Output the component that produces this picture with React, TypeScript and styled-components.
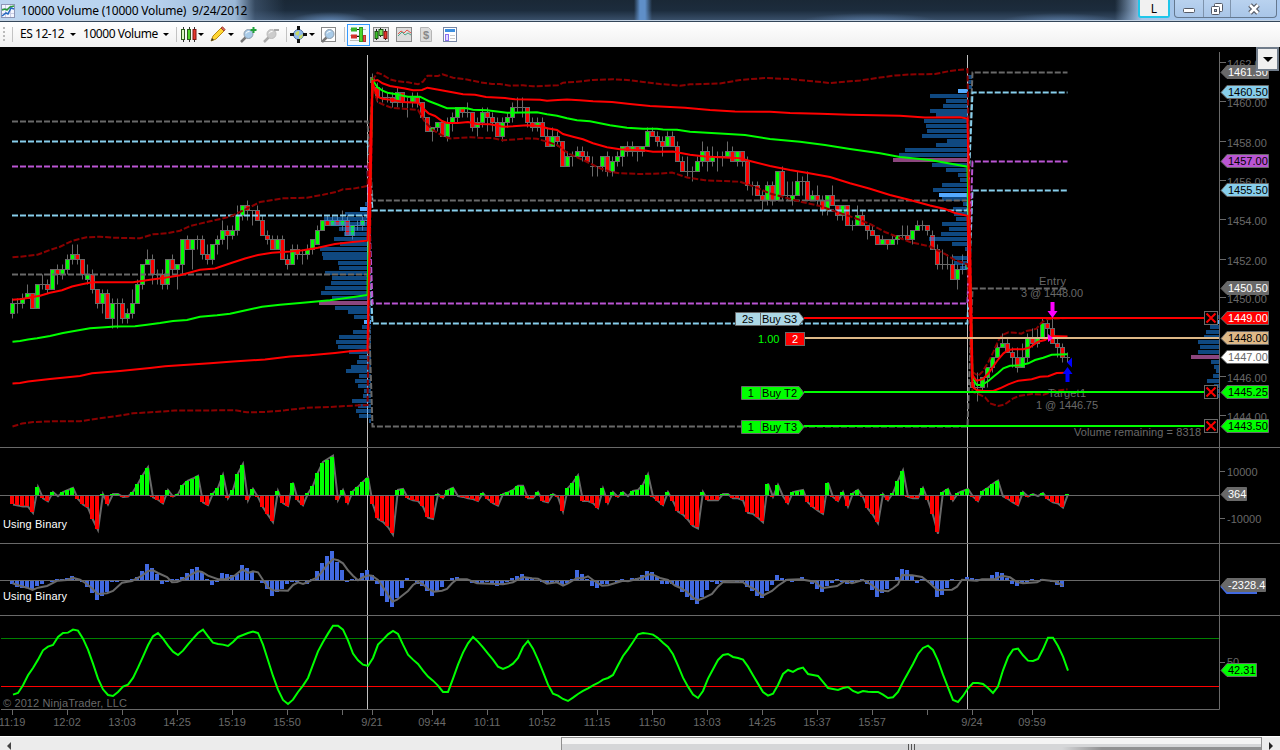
import styled, { createGlobalStyle } from "styled-components";

type Candle = [number, number, number, number];
type ProfileRow = [number, number, string?];

const GRAY = "#696969";
const SKY = "#87ceeb";
const ORCHID = "#ba55d3";
const LIME = "#00ff00";
const RED = "#ff0000";
const DARK_RED = "#8b0000";

const barX = (i: number) => 12.5 + i * 5;
const tickY = (t: number) => Math.round(313.1 - 4.91 * t) + 0.5;

// open, close, high, low in quarter point ticks from 1449.25
const candles: Candle[] = [
  [0, 2, 3, -1], [2, 2, 3, 0], [2, 3, 4, 1], [3, 4, 6, 3], [4, 1, 4, 1],
  [1, 6, 6, 1], [6, 6, 8, 5], [6, 5, 7, 4], [5, 9, 9, 5], [9, 8, 10, 6],
  [8, 9, 10, 7], [9, 11, 12, 8], [11, 12, 14, 10], [12, 11, 14, 10], [11, 8, 11, 7],
  [7, 8, 10, 6], [8, 5, 9, 4], [5, 2, 5, 1], [2, 4, 5, 0], [4, -1, 5, -1],
  [-1, 2, 3, -3], [2, 2, 3, -3], [2, -1, 3, -2], [-1, 0, 1, -2], [0, 2, 5, -1],
  [2, 6, 7, 2], [6, 10, 10, 5], [10, 11, 13, 10], [11, 8, 12, 6], [8, 8, 9, 6],
  [8, 6, 9, 5], [6, 11, 11, 5], [11, 9, 12, 8], [9, 10, 10, 5], [10, 15, 15, 8],
  [15, 13, 16, 13], [13, 15, 15, 9], [15, 15, 16, 13], [15, 12, 16, 11], [12, 11, 14, 10],
  [11, 14, 14, 10], [14, 15, 16, 12], [15, 17, 19, 14], [17, 16, 18, 13], [16, 17, 18, 15],
  [17, 20, 22, 16], [20, 22, 22, 19], [22, 21, 23, 19], [21, 21, 21, 18], [21, 19, 22, 19],
  [19, 16, 20, 16], [16, 15, 17, 14], [15, 13, 16, 13], [13, 15, 16, 13], [15, 11, 16, 11],
  [11, 10, 12, 9], [10, 13, 14, 10], [13, 12, 14, 11], [12, 12, 13, 10], [12, 13, 14, 11],
  [13, 15, 15, 12], [14, 17, 18, 14], [17, 19, 19, 17], [19, 18, 20, 18], [18, 19, 20, 18],
  [19, 18, 20, 18], [18, 19, 21, 17], [19, 16, 20, 16], [16, 18, 18, 15], [18, 18, 19, 17],
  [18, 19, 20, 17], [19, 19, 20, 18], [48, 47, 49, 46], [46, 44, 47, 43], [44, 44, 46, 43],
  [44, 44, 45, 43], [44, 43, 45, 42], [43, 45, 46, 42], [45, 43, 45, 42], [43, 43, 44, 40],
  [43, 44, 45, 42], [44, 43, 45, 42], [43, 40, 43, 40], [40, 37, 40, 37], [37, 38, 38, 35],
  [38, 39, 39, 37], [39, 36, 39, 36], [36, 39, 40, 35], [39, 40, 41, 37], [40, 42, 42, 39],
  [42, 41, 42, 40], [41, 41, 43, 40], [41, 38, 41, 37], [38, 39, 40, 36], [39, 41, 42, 38],
  [41, 40, 42, 37], [40, 39, 41, 37], [39, 36, 40, 36], [36, 39, 40, 35], [39, 40, 41, 38],
  [40, 42, 43, 39], [42, 42, 44, 41], [42, 42, 44, 40], [42, 39, 42, 38], [39, 38, 40, 37],
  [38, 39, 40, 37], [39, 36, 40, 36], [36, 34, 38, 34], [34, 36, 38, 34], [36, 35, 37, 34],
  [35, 30, 35, 30], [30, 32, 33, 30], [32, 32, 33, 30], [32, 33, 34, 32], [33, 32, 34, 31],
  [32, 31, 33, 31], [30, 30, 32, 28], [30, 30, 30, 28], [30, 32, 32, 29], [32, 29, 33, 28],
  [29, 31, 32, 28], [31, 32, 33, 30], [32, 34, 34, 30], [34, 33, 35, 32], [33, 34, 35, 32],
  [34, 33, 34, 31], [33, 34, 34, 32], [34, 37, 38, 34], [37, 36, 38, 36], [36, 35, 37, 34],
  [35, 34, 36, 32], [34, 36, 37, 34], [36, 34, 37, 34], [34, 31, 35, 31], [31, 29, 32, 29],
  [29, 29, 32, 28], [29, 29, 30, 27], [29, 31, 32, 29], [31, 33, 35, 30], [33, 31, 34, 29],
  [31, 32, 34, 30], [32, 32, 33, 29], [32, 32, 33, 30], [32, 33, 35, 32], [33, 31, 34, 31],
  [31, 33, 33, 30], [33, 31, 33, 30], [31, 26, 32, 25], [26, 26, 27, 24], [26, 24, 27, 24],
  [24, 23, 25, 21], [23, 26, 27, 22], [26, 23, 27, 22], [23, 29, 29, 23], [29, 24, 30, 23],
  [24, 24, 27, 23], [23, 24, 27, 22], [24, 27, 29, 24], [27, 27, 28, 24], [27, 23, 29, 23],
  [23, 24, 25, 23], [24, 23, 26, 22], [23, 21, 24, 20], [21, 24, 24, 20], [24, 22, 26, 22],
  [22, 20, 22, 19], [20, 22, 22, 19], [22, 18, 22, 18], [18, 18, 19, 17], [18, 20, 22, 18],
  [20, 18, 21, 18], [18, 17, 18, 15], [17, 16, 18, 16], [16, 14, 16, 14], [14, 15, 16, 14],
  [15, 14, 15, 13], [14, 15, 16, 14], [15, 16, 16, 14], [16, 16, 18, 15], [16, 15, 18, 15],
  [15, 17, 17, 14], [17, 18, 19, 17], [18, 18, 19, 17], [18, 17, 18, 16], [16, 13, 17, 13],
  [13, 10, 14, 9], [10, 10, 13, 9], [10, 10, 12, 9], [10, 7, 12, 7], [7, 9, 10, 5],
  [9, 9, 12, 8], [9, 10, 10, 9], [-14, -15, -13, -15], [-15, -15, -12, -18], [-15, -13, -13, -16],
  [-13, -11, -11, -15], [-11, -9, -9, -12], [-9, -7, -6, -9], [-7, -6, -4, -7], [-6, -8, -5, -8],
  [-8, -9, -7, -11], [-9, -11, -7, -12], [-11, -9, -6, -11], [-9, -5, -4, -10], [-5, -6, -3, -7],
  [-6, -5, -3, -7], [-5, -2, -1, -5], [-2, -3, -1, -5], [-3, -6, -1, -6], [-6, -7, -5, -9],
  [-7, -9, -6, -10], [-9, -9, -8, -10],
];

// five session levels, one y per session
const levels = [
  { color: GRAY, ys: [121.5, 200.5, 72.5] },
  { color: GRAY, ys: [274.5, 426.5, 288.5] },
  { color: SKY, ys: [141.5, 210.5, 92.5] },
  { color: SKY, ys: [215.5, 323.5, 190.5] },
  { color: ORCHID, ys: [166.5, 303.5, 161.5] },
];

const bands = [
  {
    color: DARK_RED,
    dashed: true,
    points:
      "12.5,257.3 20,256.7 37.5,254.7 50,250 60,246.7 72.5,240.7 86.5,237.3 100,236.7 113,237.7 140,238.3 153,234.3 167,233.3 180,230.7 190,226 210,221.3 230,216.7 247,208.7 260,202 283,198.3 307,197.7 323,194.7 337,191.7 343,189.3 353,188.7 367.5,186 372.5,80 377.5,72.7 382.5,74.7 390,79.3 397.5,81.3 408,82.3 418,84.3 423,81.7 427.5,75.7 438,76 442.5,74.3 453,77.7 468,79.7 480,82.3 492,84 500,84 510,85.7 523,85.3 533,86.3 547,85.7 558,85.3 563,82.7 577,81.7 593,80 613,79.3 627,80 643,82 660,84 680,85.7 690,84.3 720,83.5 740,80 765,78 790,79 830,83 860,80.5 880,77.5 895,75.5 910,74.5 935,74 950,71 967.5,69 972.5,372 978,375.7 982.5,371.7 988.5,361.7 993.5,351.7 998,341 1002.5,335 1008.5,332.3 1015,332.7 1021.5,333.7 1026.5,331 1031.5,330 1036.5,328.7 1041.5,322.7 1046.5,319.3 1067.5,318",
  },
  {
    color: DARK_RED,
    dashed: true,
    points:
      "12.5,426.5 22,423.5 33,422 52,421.3 80,421.3 97,418.7 115,416.3 133,413.3 155,412 175,410.5 235,410.3 247,412.3 265,412 285,410.3 307,407.7 330,407 345,406 367.5,405 372.5,85 377.5,102 383,104.5 392,108 403,108.7 418,110 425,122 433,130 443,136 450,138.5 470,137.3 485,138 492,138 503,140.3 517,139.3 527,138.3 537,138.7 547,141.7 557,145 568,153.3 583,160 600,168.3 610,171.7 620,173.3 640,174 660,173.5 672,172.5 687,177.5 705,180.3 740,181.7 755,187 770,193.5 785,197.5 800,201.5 820,206 835,211.3 855,218 870,224 885,232 910,242 930,246.5 945,254 955,260 967.5,264.3 972.5,391.7 978.3,394 985,397.3 990,403.3 998.3,406 1005,404.3 1013.3,398.3 1020,395.7 1031.7,394 1043.3,394.7 1056.7,390.7 1067.5,389.3",
  },
  {
    color: LIME,
    dashed: false,
    points:
      "12.5,341.7 20,341 28,339.5 37,338.3 50,336 63,333 80,330 90,328.3 105,327.3 115,326.5 135,326.3 147,324.7 160,323 173,321 187,320 200,316.7 217,315.3 230,313.7 247,310 262,306.7 280,304.7 300,303 330,300.3 350,297.5 367.5,295 372.5,80 377.5,87.3 382.5,90.7 387.5,92.7 395,94 403,95.7 408,96.7 420,96.7 428.5,101 437,104.3 447,108.3 467,108.3 473,109.7 487,110.3 507,112.7 537,112.3 547,114.3 557,115.7 567,118.3 577,120.3 590,121.3 600,123.3 610,125.3 627,127.7 643,128.7 657,128.7 663,129.5 677,129.7 690,131.7 720,133.5 745,135 770,139 800,141.7 825,145 850,149 880,153.3 900,157 930,160 967.5,166.7 972.5,378 976.7,385 981.7,385 988.3,381 993.3,376.7 998.3,372.7 1003.3,368.3 1010,365.7 1020,365.3 1028.3,363.3 1035,360 1043.3,357.7 1051.7,354.7 1067.5,354.3",
  },
  {
    color: RED,
    dashed: false,
    points:
      "12.5,299.7 22,299 30,297.5 40,295.7 50,292.7 62,290.3 72,286.5 82,284.3 92,282.3 133,282.3 150,279.7 165,277.7 180,275.3 200,269.7 215,268.5 232,262.7 245,258.5 258,255 272,252.7 290,251.5 303,250.3 318,247.7 335,244 350,242.3 367.5,240.7 372.5,81 377.5,80 382.5,83.3 390,86 405,88.5 413,90.3 422,90 427.5,87.7 440,90 455,92.7 463,94.3 475,94.7 486,97 505,98 515,99.3 540,99.7 547,100.7 558,100 567,99.5 580,100.3 593,101.3 612,102 630,104 650,106 660,106.5 685,107.8 710,110 735,111.5 770,111.8 790,113 820,113.8 850,114.7 900,115.7 925,117.5 960,117.3 967.5,118.5 972.5,375 976.5,380.7 982.5,379.3 988.5,373.3 993.5,366 998.5,359 1003.5,353.3 1008.5,350 1013.5,349.3 1023.5,349.3 1030,347.3 1038,341.7 1045,340 1051.5,336 1067.5,336.5",
  },
  {
    color: RED,
    dashed: false,
    points:
      "12.5,383.5 20,383 28,381.5 50,379 80,376 92,373.3 120,371 150,368 165,366.3 210,363.3 233,361.5 265,359.5 290,356.5 310,355.3 335,353 350,351.3 367.5,350.3 372.5,82 375,90 377.5,96.7 382.5,98.7 393,100 403,102 418,102.7 423,108.3 428.5,113.3 435,116 442,121 447,123 458,123 468,122 477,124 490,124.3 503,126.7 513,126.3 527,125.3 540,126 547,128.3 557,130 563,134 573,136.7 583,139.3 593,143.3 607,147.3 620,149.3 643,150.3 653,151.7 673,151.5 690,154.7 705,156.5 740,158.3 750,161 770,166 790,170 805,172.5 830,177 850,183.3 870,188.7 890,195 908,199.5 930,205.5 945,209 955,213 967.5,215.7 972.5,387 976.7,390 983.3,391 993.3,391 1000,388.3 1008.3,384.3 1018.3,380.7 1031.7,379.3 1040,376.7 1048.3,376.3 1056.7,373 1067.5,372.7",
  },
];

// left edge and centre y of every volume row
const profiles: { right: number; rows: ProfileRow[] }[] = [
  {
    right: 371,
    rows: [
      [365, 204], [360, 209, "hi"], [345, 214], [324, 219], [331, 224], [339, 229], [344, 234],
      [334, 239], [340, 244], [320, 249], [322, 254], [323, 258], [338, 263], [339, 268],
      [325, 273], [332, 278], [331, 283], [325, 288], [321, 293], [332, 298], [319, 303, "poc"],
      [335, 308], [348, 312], [354, 317], [364, 322, "hi"], [362, 327], [353, 332], [339, 337],
      [336, 342], [338, 347], [349, 352], [359, 357], [357, 362], [351, 367], [346, 371],
      [359, 376], [355, 381], [358, 386], [364, 391], [363, 396], [352, 401], [358, 406],
      [356, 411], [359, 416], [369, 421],
    ],
  },
  {
    right: 968,
    rows: [
      [958, 91, "hi"], [930, 96], [946, 101], [943, 106], [930, 111], [936, 115], [924, 121],
      [926, 126], [927, 131], [922, 136], [947, 141], [936, 145], [905, 150], [899, 155],
      [893, 160, "poc"], [932, 165], [946, 170], [958, 175], [960, 180], [942, 185], [933, 190],
      [939, 195, "hi"], [942, 199], [963, 204], [953, 209], [954, 214], [956, 219], [942, 224],
      [949, 229], [941, 234], [929, 239], [952, 244], [965, 249], [953, 258], [954, 263],
      [960, 268],
    ],
  },
  {
    right: 1219,
    rows: [
      [1216, 317], [1217, 322, "hi"], [1210, 327], [1206, 332], [1204, 337], [1198, 342],
      [1200, 347], [1198, 352], [1191, 357, "poc"], [1211, 362], [1214, 367], [1216, 371],
      [1213, 376], [1207, 381], [1214, 386], [1215, 391], [1217, 396],
    ],
  },
];

// bar heights in thirds of a pixel
const waves = [
  -26, -29, -32, -32, -50, 25, -8, -17, 10, -2, 10, 16, 22, -10, -26, -35, -70, -100, 4, -26, 4, 4,
  -4, -3, 10, 34, 60, 82, -5, -12, -23, 16, -3, 4, 30, 43, 49, 57, -20, -28, 6, 22, 60, -8, 16, 64,
  91, -14, 19, -4, -34, -56, -77, 13, -22, -30, 37, -14, -28, 6, 28, 67, 97, 106, 115, -13, 16, -22,
  13, 25, 40, 52, -26, -68, -76, -91, -113, 16, 19, -8, -14, -16, -32, -64, -68, 4, -8, 16, 22, -2,
  -4, -8, -10, -16, 7, -10, -22, -29, 4, 9, 16, 28, 28, -8, -8, 10, -16, -20, 4, -4, -46, 22, 37, 58,
  -16, -16, -22, -36, 20, -22, 10, -4, 10, -2, 13, 16, 31, 61, -3, -16, -28, 10, -16, -46, -55, -70,
  -88, -95, 10, -14, -14, -14, 4, 4, -8, -8, -14, -50, -53, -64, -77, 34, -4, 31, -2, -23, 10, 13,
  16, -20, -33, -44, -53, 37, -4, -16, 10, -32, 7, 16, -4, -38, -56, -80, 4, -14, 7, 43, 73, -4, -8,
  -8, 22, -14, -56, -110, 10, 19, -14, 7, 13, 19, -3, -16, 13, 22, 34, 43, -2, -10, -20, -28, 10, -3,
  4, -2, 7, -10, -20, -23, -35, 4,
];

const delta = [
  -10, -19, -22, -22, -26, -16, -10, -2, -4, 3, 4, 7, 12, 4, -4, -19, -37, -58, -46, -34, -5, -5, -2,
  -2, 2, 10, 28, 49, 37, 19, -10, -5, 2, 4, 10, 22, 34, 40, 24, 2, -13, -3, 22, 19, 16, 19, 46, 37,
  24, -2, -7, -25, -46, -34, -25, -10, -5, -3, -2, -10, 4, 28, 52, 73, 88, 55, 31, -4, 2, 2, 22, 31,
  16, -10, -46, -64, -79, -52, -22, 7, -2, -10, -16, -31, -46, -35, -19, -2, 7, 10, 2, 2, -7, -7, -7,
  -5, -7, -16, -9, -5, 7, 13, 19, 10, 2, -2, -4, -10, -8, -5, -13, -7, 4, 31, 19, 4, -16, -22, -11,
  -10, -2, -5, 4, -2, 7, 5, 16, 28, 25, 10, -10, -10, -10, -16, -34, -49, -58, -70, -49, -28, -5,
  -10, -5, -2, -2, -5, -5, -19, -31, -46, -52, -31, -13, 16, 7, 2, -4, 2, 10, -2, -10, -25, -34, -17,
  -7, 4, -5, -10, -5, -3, 4, -10, -28, -49, -37, -25, -2, 10, 34, 31, 13, -7, 2, -2, -13, -49, -43,
  -22, 4, -1, -2, 10, 5, 2, 1, 4, 16, 25, 20, 7, -10, -16, -8, -4, 4, 1, 2, -2, -4, -13, -19, 0,
];

const deltaAverage =
  "12.5,583.3 20,585.7 27,587.7 32.5,590 38,587.7 47,586 57.5,580.7 67,580 73,577.7 80,579.7 85,582.7 92,588.3 97.5,594 107,593.3 113,591 122,582.7 132,581 142,575.7 148,571 153,570.3 158,573 167,577 172,582.3 177,582 183,579.7 192,574 197.5,571 202,572 208,575.7 218,579.3 227,579 235,575.3 242.5,569.3 248,573 253,571.3 258,572.3 263,580 268,587.3 273,590.3 288,590.7 293,585 298,582.3 303,584 308,582 313,579.3 317,577.7 322,571.7 327,565 333,559 338,560.3 343,563.3 348,570.3 353,575.7 358,580.3 362,577.7 368,575.3 372,575.7 378,580 385,590 392.5,601.7 397,599.7 402,595.7 408,591 413,585 418,582 423,584.3 428,589 434,591.7 442,590.7 447,589 452,583.3 457,579.3 467,579.3 477,583.3 490,583.7 503,584.3 513,582.3 518,579.3 523,577 532,578.3 538,578.7 547,583.7 557,582.3 563,585.7 568,583.3 577,578 583,578.3 588,576.3 593,580 602,585.7 608,585.3 623,580.7 628,581.3 637,579 643,577.3 648,574.3 653,574.7 660,578 668,580 675,585.7 680,587.7 687,591.7 693,597.7 698,600.3 703,598.3 712,594 718,586.7 723,582 743,582.3 748,586 755,589.3 762.5,595.7 772,591 778,585.7 787,579.7 800,579.3 815,581.7 822,588.3 837,586 845,581 852,583.3 863,580 872,585 878,590.3 888,591.3 893,588.3 898,584.3 902,575 912,575.3 922,577 930,583.3 937,590 952,589.7 957,586.7 962,579.7 977,580.7 982,579.3 995,579 1002,575.7 1010,577.3 1017,582 1023,583.3 1037,582.3 1042,579.7 1055,581.3 1063,585.7";

const stochastic = [
  748, 743, 720, 690, 668, 643, 615, 604, 599, 575, 563, 562, 553, 556, 580, 613, 655, 700, 732, 749,
  752, 740, 724, 718, 698, 667, 634, 600, 573, 563, 580, 601, 619, 629, 616, 597, 580, 563, 553, 573,
  592, 596, 598, 602, 590, 575, 569, 563, 559, 563, 598, 645, 692, 733, 764, 776, 763, 740, 721, 698,
  658, 618, 590, 565, 541, 541, 553, 585, 625, 645, 658, 662, 638, 598, 583, 567, 557, 566, 598, 628,
  643, 656, 676, 694, 706, 721, 740, 740, 700, 658, 622, 594, 575, 589, 606, 625, 643, 664, 671, 665,
  655, 638, 605, 587, 610, 643, 680, 718, 745, 751, 761, 767, 757, 746, 737, 729, 720, 713, 703, 698,
  689, 660, 632, 612, 590, 567, 563, 565, 568, 578, 592, 605, 627, 661, 697, 724, 748, 758, 737, 700,
  672, 644, 629, 626, 635, 638, 643, 664, 690, 715, 740, 751, 745, 719, 686, 674, 680, 671, 667, 686,
  689, 692, 710, 728, 731, 734, 728, 725, 737, 743, 737, 739, 740, 740, 748, 758, 756, 740, 710, 683,
  656, 626, 608, 601, 614, 646, 688, 726, 764, 770, 752, 729, 713, 713, 716, 728, 743, 724, 675, 636,
  613, 610, 630, 646, 647, 641, 612, 577, 577, 602, 634, 676,
];

const scaleLabels: [string, number][] = [
  ["1462.00", 63], ["1460.00", 102], ["1458.00", 142], ["1456.00", 181], ["1454.00", 220],
  ["1452.00", 260], ["1450.00", 298], ["1446.00", 377], ["1444.00", 416],
];

const priceTags: [string, number, string, string][] = [
  ["1461.50", 72, GRAY, "#fff"],
  ["1460.50", 92, SKY, "#000"],
  ["1457.00", 161, ORCHID, "#000"],
  ["1455.50", 190, SKY, "#000"],
  ["1450.50", 288, GRAY, "#fff"],
  ["1449.00", 318, RED, "#fff"],
  ["1448.00", 338, "#deb887", "#000"],
  ["1447.00", 357, "#fff", GRAY],
  ["1445.25", 392, LIME, "#000"],
  ["1443.50", 426, LIME, "#000"],
];

const timeTicks: [number, string][] = [
  [12.5, "11:19"], [67.5, "12:02"], [122.5, "13:03"], [177.5, "14:25"], [232.5, "15:19"],
  [287.5, "15:50"], [342.5, ""], [372.5, "9/21"], [432.5, "09:44"], [487.5, "10:11"],
  [542.5, "10:52"], [597.5, "11:15"], [652.5, "11:50"], [707.5, "13:03"], [762.5, "14:25"],
  [817.5, "15:37"], [872.5, "15:57"], [927.5, ""], [972.5, "9/24"], [1032.5, "09:59"],
];

const Tag = ({
  y,
  text,
  fill,
  color,
  width = 47,
}: {
  y: number;
  text: string;
  fill: string;
  color: string;
  width?: number;
}) => (
  <g>
    <path
      d={`M1221 ${y + 0.5}L1227 ${y - 6.5}H${1221.5 + width}V${y + 6.5}H1227Z`}
      fill={fill}
      stroke={GRAY}
    />
    <text x={1228} y={y + 4} fill={color}>
      {text}
    </text>
  </g>
);

const OrderTag = ({
  x,
  y,
  qty,
  name,
  fill,
}: {
  x: number;
  y: number;
  qty: string;
  name: string;
  fill: string;
}) => (
  <g>
    <path d={`M${x} ${y - 6.5}H799L804 ${y}L799 ${y + 6.5}H${x}Z`} fill={fill} stroke={GRAY} />
    <path d={`M760.5 ${y - 6.5}v13`} stroke={GRAY} />
    <text x={(x + 760) / 2} y={y + 4} fill="#000" textAnchor="middle">
      {qty}
    </text>
    <text x={762} y={y + 4} fill="#000" textLength={35}>
      {name}
    </text>
  </g>
);

const SessionLines = ({ from, to }: { from: number; to: number }) => (
  <path d={`M367.5 ${from}V${to}M967.5 ${from}V${to}`} stroke="#c0c0c0" />
);

const PricePanel = () => (
  <Panel>
    <Plot viewBox="0 47 1280 400" height={400}>
      <SessionLines from={55} to={447} />
      <path d="M1219.5 52V447" stroke={GRAY} />
      {candles.map(([open, close, high, low], i) => {
        const x = barX(i);
        const top = tickY(Math.max(open, close));
        const bottom = tickY(Math.min(open, close));
        return (
          <g key={i} stroke={GRAY}>
            <path d={`M${x} ${tickY(high)}V${tickY(low)}`} />
            {open === close ? (
              <path d={`M${x - 2.5} ${top}h5`} />
            ) : (
              <rect
                x={x - 2}
                y={top}
                width={4}
                height={bottom - top}
                fill={close > open ? LIME : RED}
              />
            )}
          </g>
        );
      })}
      <g shapeRendering="crispEdges">
        {profiles.map(({ right, rows }) =>
          rows.map(([left, y, kind]) => (
            <rect
              key={`${right}-${y}`}
              x={left}
              y={y - 2}
              width={right - left}
              height={4}
              fill={kind === "hi" ? "#55aaff" : kind === "poc" ? "#c864b4" : "#1e90ff"}
              opacity={kind === "hi" ? 1 : kind === "poc" ? 0.7 : 0.5}
            />
          ))
        )}
        <path d="M968 77h4M968 82h4M968 87h4" stroke="#0f4880" strokeWidth={4} />
      </g>
      {levels.map(({ color, ys }, i) => (
        <g key={i} fill="none" stroke={color} strokeWidth={2}>
          <path d={`M12 ${ys[0]}H367.5L372.5 ${ys[1]}H967.5L972.5 ${ys[2]}H1067.5`} strokeDasharray="6 2" />
        </g>
      ))}
      {bands.map(({ color, dashed, points }, i) => (
        <polyline
          key={i}
          points={points}
          fill="none"
          stroke={color}
          strokeWidth={2}
          strokeDasharray={dashed ? "6 2" : undefined}
        />
      ))}
      <g fill={GRAY}>
        <text x={1039} y={285} textLength={27}>Entry</text>
        <text x={1021} y={297} textLength={62}>3 @ 1448.00</text>
        <text x={1048} y={397} textLength={38}>Target1</text>
        <text x={1036} y={409} textLength={62}>1 @ 1446.75</text>
        <text x={1074} y={436} textLength={127}>Volume remaining = 8318</text>
      </g>
      <g strokeWidth={2}>
        <path d="M804 318H1204" stroke={RED} />
        <path d="M805 338H1219" stroke="#deb887" />
        <path d="M804 392H1204M804 426H1204" stroke={LIME} />
      </g>
      <path d="M1050.5 302h4v9h3l-5 7l-5-7h3ZM1048 334l5 4l-5 4Z" fill="#f0f" />
      <path d="M1065.500 382h4v-8h3l-5-7l-5 7h3ZM1072 357.500v10l-5-5Z" fill="#00f" />
      <OrderTag x={735.5} y={319} qty="2s" name="Buy S3" fill="#add8e6" />
      <OrderTag x={741.5} y={393} qty="1" name="Buy T2" fill={LIME} />
      <OrderTag x={741.5} y={427} qty="1" name="Buy T3" fill={LIME} />
      <text x={758} y={343} fill={LIME}>1.00</text>
      <rect x={785.5} y={332.5} width={19} height={13} fill={RED} stroke={GRAY} />
      <text x={792} y={343} fill="#fff">2</text>
      {[318, 392, 426].map((y) => (
        <g key={y}>
          <rect x={1204.5} y={y - 6.5} width={13} height={13} fill="#000" stroke={GRAY} />
          <path d={`M1206.500 ${y - 4.5}l9 9m0-9l-9 9`} stroke={RED} strokeWidth={2} />
        </g>
      ))}
      {scaleLabels.map(([text, y]) => (
        <g key={text}>
          <path d={`M1219 ${y - 0.5}h7`} stroke={GRAY} />
          <text x={1227} y={y + 5} fill={GRAY}>{text}</text>
        </g>
      ))}
      {priceTags.map(([text, y, fill, color]) => (
        <Tag key={text} text={text} y={y} fill={fill} color={color} />
      ))}
    </Plot>
    <ScaleButton>
      <Caret $size={5} />
    </ScaleButton>
  </Panel>
);

const WavePanel = () => (
  <Panel>
    <Plot viewBox="0 448 1280 95" height={95}>
      <path d="M0 495.500H1219M1219.500 448V543M1219 471.500h6M1219 518.500h6" stroke={GRAY} />
      <SessionLines from={448} to={543} />
      <polyline
        points={waves.map((v, i) => `${barX(i) + 0.5},${495.5 - (v * 1.04) / 3}`).join(" ")}
        fill="none"
        stroke={GRAY}
        strokeWidth={2}
      />
      <g shapeRendering="crispEdges">
        {waves.map((v, i) => (
          <rect
            key={i}
            x={barX(i) - 2.5}
            y={v > 0 ? 495 - v / 3 : 495.5}
            width={4}
            height={Math.abs(v) / 3}
            fill={v > 0 ? LIME : RED}
          />
        ))}
      </g>
      <text x={3} y={528} fill="#fff" textLength={64}>Using Binary</text>
      <text x={1227} y={476} fill={GRAY}>10000</text>
      <text x={1227} y={523} fill={GRAY}>-10000</text>
      <Tag y={494} text="364" fill={GRAY} color="#fff" width={25} />
    </Plot>
  </Panel>
);

const DeltaPanel = () => (
  <Panel>
    <Plot viewBox="0 544 1280 71" height={71}>
      <path d="M0 580.500H1219M1219.500 544V615" stroke={GRAY} />
      <SessionLines from={544} to={615} />
      <g shapeRendering="crispEdges" fill="#4169e1">
        {delta.map((v, i) => (
          <rect
            key={i}
            x={barX(i) - 2.5}
            y={v > 0 ? 580 - v / 3 : 580.5}
            width={4}
            height={Math.abs(v) / 3}
          />
        ))}
      </g>
      <polyline points={deltaAverage} fill="none" stroke={GRAY} strokeWidth={2} />
      <text x={3} y={600} fill="#fff" textLength={64}>Using Binary</text>
      <path d="M1221 586l6 7h30" fill="none" stroke="#4169e1" strokeWidth={2} />
      <Tag y={585} text="-2328.4" fill={GRAY} color="#fff" width={44} />
    </Plot>
  </Panel>
);

const StochasticPanel = () => (
  <Panel>
    <Plot viewBox="0 616 1280 94" height={94}>
      <path d="M1 638.500H1219" stroke="#008000" />
      <path d="M1 686.500H1219" stroke={RED} />
      <SessionLines from={616} to={709} />
      <path d="M1 709.500H1219.500V616M1219 662.500h6" fill="none" stroke={GRAY} />
      <polyline
        points={stochastic.map((v, i) => `${barX(i) + 0.5},${445.3 + v / 3}`).join(" ")}
        fill="none"
        stroke={LIME}
        strokeWidth={2}
      />
      <text x={3} y={707} fill={GRAY} textLength={124}>© 2012 NinjaTrader, LLC</text>
      <text x={1227} y={666} fill={GRAY}>50</text>
      <Tag y={670} text="42.31" fill={LIME} color="#000" width={35} />
    </Plot>
  </Panel>
);

const TimeScale = () => (
  <Plot viewBox="0 710 1280 26" height={26}>
    {timeTicks.map(([x, label]) => (
      <g key={x}>
        <path d={`M${x} 710v5`} stroke={GRAY} />
        <text x={x - 0.5} y={726} fill={GRAY} textAnchor="middle">{label}</text>
      </g>
    ))}
  </Plot>
);

const Magnifier = ({ muted }: { muted?: boolean }) => (
  <g>
    <path d="M1 16L6 11" stroke={muted ? "#aaa" : "#777"} strokeWidth={2.5} />
    <circle cx={8.500} cy={8} r={4.5} fill={muted ? "#ccc" : "#a9cbe8"} stroke={muted ? "#bbb" : "#8d9cab"} />
    <path d="M6 7.500q1-2.500 3.500-2" stroke="#fff" fill="none" />
  </g>
);

const TitleBarArea = () => (
  <TitleBar>
    <svg width={14} height={14}>
      <rect x={0.5} y={0.5} width={13} height={13} fill="#f4f6ff" stroke="#8d96b5" />
      <path d="M4.500 1v12M9.500 1v12M1 4.500h12M1 9.500h12" stroke="#c9cee6" />
      <path d="M1 6l3-1 2 1 3-3 4-1" fill="none" stroke="#2a9b3c" strokeWidth={1.5} />
      <path d="M1 12l4-3 2 1 3-6 3 1" fill="none" stroke="#2468c0" strokeWidth={1.5} />
    </svg>
    <Title>10000 Volume (10000 Volume)&nbsp; 9/24/2012</Title>
    <LinkButton>L</LinkButton>
    <WindowButtons>
      <WindowButton $width={28}>
        <svg width={14} height={12}>
          <rect x={1.5} y={5.5} width={11} height={4} rx={1} fill="#fff" stroke="#555a66" />
        </svg>
      </WindowButton>
      <WindowButton $width={27}>
        <svg width={14} height={14} fill="#fff" stroke="#555a66">
          <rect x={4.5} y={1.5} width={8} height={8} rx={1} />
          <rect x={1.5} y={4.500} width={8} height={8} rx={1} />
          <rect x={4.500} y={7.500} width={2} height={2} fill="#9fb8d6" />
        </svg>
      </WindowButton>
      <WindowButton $width={46}>
        <svg width={14} height={12}>
          <path d="M3 2l8 8M11 2l-8 8" stroke="#555a66" strokeWidth={5} />
          <path d="M3 2l8 8M11 2l-8 8" stroke="#fff" strokeWidth={2.5} />
        </svg>
      </WindowButton>
    </WindowButtons>
  </TitleBar>
);

const ToolBarArea = () => (
  <ToolBar>
    <Grip />
    <Separator />
    <ToolText $width={44} $left={7}>ES 12-12</ToolText>
    <Caret $size={3} $left={6} />
    <ToolText $width={75} $left={7}>10000 Volume</ToolText>
    <Caret $size={3} $left={5} />
    <Separator $left={7} />
    <ToolIcon $left={4}>
      <path d="M2.500 1v15M8.500 1v15M13.500 1v15" stroke="#333" />
      <rect x={0.5} y={3.5} width={3} height={10} fill="#d8f8c0" stroke="#2b5b1b" />
      <rect x={6.5} y={3.5} width={3} height={10} fill="#4fd62a" stroke="#2b5b1b" />
      <rect x={12} y={3.5} width={3} height={10} fill="#e8382c" stroke="#7b1612" />
    </ToolIcon>
    <Caret $size={3} />
    <ToolIcon $left={6}>
      <path d="M1 15l2-5L11 2l3 3L6 13Z" fill="#ffd633" stroke="#b98a12" />
      <path d="M11 2l1.500-1.200L15 3.500 14 5Z" fill="#e06a5a" stroke="#a04030" />
      <path d="M1 15l1-3 2 2Z" fill="#333" />
    </ToolIcon>
    <Caret $size={3} $left={1} />
    <ToolIcon $left={6}>
      <Magnifier />
      <path d="M13.500 1v6M10.500 4h6" stroke="#1fa03a" strokeWidth={2} />
    </ToolIcon>
    <ToolIcon $left={6}>
      <Magnifier muted />
      <path d="M11 4h5" stroke="#aaa" strokeWidth={2} />
    </ToolIcon>
    <Separator $left={6} />
    <ToolIcon $left={3}>
      <circle cx={8.500} cy={8.500} r={5} fill="#8fb9ee" stroke="#5b7aa8" />
      <path d="M5 8q1-3 4-3 1 2-1 5ZM9 10l4-2-1 4-3 1Z" fill="#c4d967" />
      <path d="M8.500 0v4M8.500 13v4M0 8.500h4M13 8.500h4" stroke="#111" strokeWidth={3} />
    </ToolIcon>
    <Caret $size={3} $left={2} />
    <ToolIcon $left={6}>
      <rect x={0.5} y={1.5} width={14} height={14} fill="#fff" stroke="#888" />
      <Magnifier />
    </ToolIcon>
    <Separator $left={6} />
    <SelectedTool>
      <svg width={17} height={17}>
        <path d="M0 3.500h16M0 9.500h16M0 14.500h16" stroke="#bbb" />
        <path d="M1 3.500h9M1 10.500h9" stroke="#111" />
        <rect x={1} y={1.500} width={6} height={4} fill="#35b52b" />
        <rect x={1} y={8.500} width={6} height={4} fill="#d3302a" />
        <rect x={9.500} y={1.500} width={3} height={14} fill="#4fd62a" stroke="#2f9a20" />
        <rect x={13.500} y={9.500} width={2} height={6} fill="#e8584c" stroke="#b33" />
      </svg>
    </SelectedTool>
    <ToolIcon $left={3}>
      <rect x={0.5} y={1.5} width={15} height={14} fill="#e4e4e4" stroke="#888" />
      <path d="M3.500 3v11M7.500 2v9M12.500 3v11" stroke="#222" />
      <rect x={2} y={5.500} width={3} height={7} fill="#3bc428" stroke="#1d5014" />
      <rect x={6} y={3.500} width={4} height={6} fill="#7be05a" stroke="#1d5014" />
      <rect x={11} y={5.500} width={3} height={7} fill="#e8382c" stroke="#7b1612" />
    </ToolIcon>
    <ToolIcon $left={6}>
      <rect x={0.5} y={1.5} width={15} height={14} fill="#dcdcdc" stroke="#888" />
      <path d="M2 8l3-3 3 2 3-3 4 3" fill="none" stroke="#e2554a" />
      <path d="M2 10l4-4 3 3 3-2 3 2" fill="none" stroke="#4ea68a" />
    </ToolIcon>
    <ToolIcon $left={6}>
      <path d="M1.500 1.500h8l3 3v11h-11Z" fill="#dcdcdc" stroke="#b5b5b5" />
      <text x={4} y={13} fill="#888" fontWeight="bold" fontSize={11}>$</text>
    </ToolIcon>
    <ToolIcon $left={7}>
      <rect x={0.500} y={1.500} width={13} height={14} fill="#fff" stroke="#7787a5" />
      <rect x={2} y={3} width={10} height={3} fill="#3d8fe0" />
      <rect x={2.500} y={8.500} width={3} height={6} fill="#e6dcff" stroke="#8a6ff0" />
      <path d="M7 9.500h5M7 12.500h5" stroke="#ccc" />
    </ToolIcon>
  </ToolBar>
);

const App = () => (
  <Window>
    <GlobalStyle />
    <TitleBarArea />
    <ToolBarArea />
    <Chart>
      <PricePanel />
      <WavePanel />
      <DeltaPanel />
      <StochasticPanel />
      <TimeScale />
    </Chart>
    <ScrollBar>
      <ScrollArrow>
        <svg width={5} height={8}>
          <path d="M4 0v8L0 4Z" fill="#444" />
        </svg>
      </ScrollArrow>
      <ScrollThumb>
        <svg width={8} height={6}>
          <path d="M0.500 0v6M3.500 0v6M6.500 0v6" stroke="#555" />
        </svg>
      </ScrollThumb>
      <ScrollArrow>
        <svg width={5} height={8}>
          <path d="M0 0v8L4 4Z" fill="#222" />
        </svg>
      </ScrollArrow>
    </ScrollBar>
  </Window>
);

export default App;

const GlobalStyle = createGlobalStyle`
  body {
    margin: 0;
    background: #000;
    overflow: hidden;
  }
`;

const Window = styled.div`
  width: 1280px;
  height: 750px;
  display: flex;
  flex-direction: column;
  overflow: hidden;
  font-family: "Noto Sans", "Open Sans", sans-serif;
`;

const TitleBar = styled.div`
  height: 22px;
  box-sizing: border-box;
  display: flex;
  align-items: flex-start;
  padding: 4px 3px 0 1px;
  border-bottom: 1px solid #35475a;
  box-shadow: inset 0 -1px #c4d3e3;
  background:
    linear-gradient(90deg, transparent 634px, #5f8fc8 640px, #5f8fc8 645px, transparent 652px),
    radial-gradient(ellipse 40px 10px at 330px 22px, rgba(120, 165, 220, 0.7), transparent),
    radial-gradient(ellipse 70px 9px at 870px 22px, rgba(110, 150, 200, 0.6), transparent),
    radial-gradient(ellipse 60px 9px at 1060px 22px, rgba(110, 150, 200, 0.6), transparent),
    linear-gradient(90deg, #bcd5f0 0, #b9d3ef 150px, #9ab7d6 235px, rgba(80, 105, 135, 0.5) 255px, transparent 285px, transparent 1115px, #a5c4e8 1142px, #a9c8ee 100%),
    linear-gradient(#1a2836 0, #1c2c3d 50%, #3b526d 100%);
`;

const Title = styled.div`
  flex: 1;
  margin-left: 6px;
  font-size: 12px;
  line-height: 14px;
  letter-spacing: -0.2px;
  color: #000;
`;

const LinkButton = styled.div`
  width: 32px;
  height: 18px;
  margin: -4px 4px 0 0;
  display: flex;
  align-items: center;
  justify-content: center;
  box-sizing: border-box;
  background: #f1f1f1;
  border: 2px solid #1fc6ea;
  border-top: 0;
  border-radius: 0 0 3px 3px;
  font-size: 12px;
`;

const WindowButtons = styled.div`
  display: flex;
  height: 18px;
  margin-top: -4px;
  box-sizing: border-box;
  border: 1px solid #64788f;
  border-top: 0;
  border-radius: 0 0 4px 4px;
  background: linear-gradient(#b9d2ef, #a9c6e8);
  overflow: hidden;
`;

const WindowButton = styled.div<{ $width: number }>`
  width: ${({ $width }) => $width}px;
  box-sizing: border-box;
  display: flex;
  align-items: center;
  justify-content: center;

  & + & {
    border-left: 1px solid #7e93ac;
  }
`;

const ToolBar = styled.div`
  height: 25px;
  box-sizing: border-box;
  display: flex;
  align-items: center;
  padding-left: 3px;
  background: linear-gradient(#fff, #f0f0f0);
`;

const Grip = styled.div`
  width: 2px;
  height: 15px;
  background: repeating-linear-gradient(#bbb 0 2px, transparent 2px 4px);
`;

const Separator = styled.div<{ $left?: number }>`
  width: 1px;
  height: 15px;
  margin-left: ${({ $left = 7 }) => $left}px;
  background: #c3c3c3;
`;

const ToolText = styled.div<{ $width: number; $left: number }>`
  width: ${({ $width }) => $width}px;
  margin-left: ${({ $left }) => $left}px;
  margin-top: -2px;
  font-size: 12px;
  letter-spacing: -0.45px;
  white-space: nowrap;
  color: #000;
`;

const Caret = styled.div<{ $size: number; $left?: number }>`
  margin-left: ${({ $left = 0 }) => $left}px;
  border: ${({ $size }) => $size}px solid transparent;
  border-top-color: #000;
  border-bottom: 0;
`;

const ToolIcon = styled.svg.attrs({ width: 17, height: 17 })<{ $left: number }>`
  flex: none;
  overflow: visible;
  margin-left: ${({ $left }) => $left}px;
  font-family: "Liberation Sans", Arial, sans-serif;
`;

const SelectedTool = styled.div`
  width: 23px;
  height: 22px;
  margin-left: 2px;
  display: flex;
  align-items: center;
  justify-content: center;
  box-sizing: border-box;
  border: 1px solid #3399ff;
  background: #f3f9ff;
`;

const Chart = styled.div`
  height: 689px;
  display: flex;
  flex-direction: column;
  background: #000;
`;

const Panel = styled.section`
  position: relative;
  border-bottom: 1px solid ${GRAY};

  &:nth-of-type(4) {
    border-bottom: 0;
  }
`;

const Plot = styled.svg.attrs({ width: 1280 })`
  display: block;
  font-family: "Liberation Sans", Arial, sans-serif;
  font-size: 11px;
`;

const ScaleButton = styled.div`
  position: absolute;
  top: 0;
  right: 1px;
  width: 23px;
  height: 24px;
  box-sizing: border-box;
  display: flex;
  align-items: center;
  justify-content: center;
  background: #f0f0f0;
  border: 2px solid #707c8a;
`;

const ScrollBar = styled.div`
  height: 14px;
  box-sizing: border-box;
  display: flex;
  justify-content: space-between;
  border-top: 1px solid #fff;
  background: #ececec;
`;

const ScrollArrow = styled.div`
  width: 18px;
  display: flex;
  align-items: flex-end;
  justify-content: center;
`;

const ScrollThumb = styled.div`
  width: 701px;
  margin-left: auto;
  box-sizing: border-box;
  display: flex;
  align-items: flex-end;
  justify-content: center;
  border: 1px solid #8f8f8f;
  border-bottom: 0;
  background:
    linear-gradient(90deg, transparent 500px, rgba(60, 60, 60, 0.45) 540px) 0 100% / 100% 3px no-repeat,
    linear-gradient(#f4f4f4 0 6px, #d5d6d8 6px);
`;
